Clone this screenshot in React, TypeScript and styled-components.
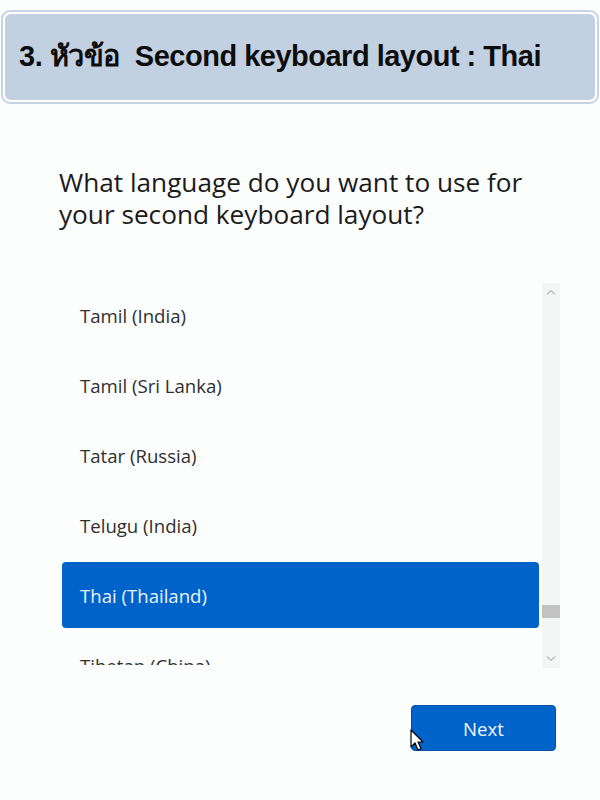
import React from "react";
import styled, { createGlobalStyle } from "styled-components";

const Global = createGlobalStyle`
  html, body { margin: 0; padding: 0; }
  body {
    background: #fcfdfd;
    width: 600px;
    height: 800px;
    overflow: hidden;
    font-family: "Open Sans", "Noto Sans", sans-serif;
  }
`;

const Page = styled.div`
  width: 600px;
  height: 800px;
  position: relative;
  display: flex;
  flex-direction: column;
`;

const HeaderFrame = styled.div`
  margin: 10px 1px 0 1px;
  padding: 2px;
  border: 2px solid #c6d4e3;
  border-radius: 9px;
  background: #ffffff;
`;

const HeaderBox = styled.div`
  height: 86px;
  background: #c2d1e1;
  border-radius: 6px;
  display: flex;
  align-items: center;
  padding: 0 0 2px 14px;
  box-sizing: border-box;
`;

const HeaderTitle = styled.h1`
  margin: 0;
  font-family: "Liberation Sans", "DejaVu Sans", sans-serif;
  font-weight: 700;
  font-size: 29px;
  letter-spacing: -0.5px;
  color: #0d0d0d;
  white-space: pre;
`;

const Content = styled.div`
  padding: 62px 0 0 59px;
  display: flex;
  flex-direction: column;
`;

const Question = styled.h2`
  margin: 0;
  font-family: "Open Sans", "Noto Sans", sans-serif;
  font-weight: 400;
  font-size: 26.2px;
  line-height: 32px;
  color: #1b1b1b;
  width: 490px;
`;

const ListArea = styled.div`
  margin-top: 50px;
  display: flex;
  align-items: flex-start;
`;

const ListViewport = styled.div`
  width: 477px;
  height: 385px;
  overflow: hidden;
  margin-left: 3px;
`;

const Item = styled.div<{ $selected?: boolean }>`
  height: ${(p) => (p.$selected ? 66 : 70)}px;
  margin: ${(p) => (p.$selected ? "2px 0" : "0")};
  box-sizing: border-box;
  display: flex;
  align-items: center;
  padding-left: 18px;
  font-family: "Open Sans", "Noto Sans", sans-serif;
  font-size: 18.6px;
  color: ${(p) => (p.$selected ? "#eaf3ff" : "#2f2f2f")};
  background: ${(p) => (p.$selected ? "#0063ca" : "transparent")};
  border-radius: 4px;
`;

const Scrollbar = styled.div`
  margin-left: 3px;
  margin-top: 3px;
  width: 18px;
  height: 385px;
  background: #f4f5f5;
  display: flex;
  flex-direction: column;
  align-items: center;
  position: relative;
`;

const Arrow = styled.div`
  height: 18px;
  display: flex;
  align-items: center;
  justify-content: center;
  color: #8a8a8a;
`;

const Track = styled.div`
  flex: 1;
  width: 100%;
  position: relative;
`;

const Thumb = styled.div`
  position: absolute;
  left: 0;
  right: 0;
  height: 13px;
  background: #c2c2c2;
`;

const Footer = styled.div`
  margin-top: 37px;
  display: flex;
  justify-content: flex-end;
  padding-right: 44px;
`;

const NextButton = styled.button`
  position: relative;
  width: 145px;
  height: 46px;
  border: 1px solid #0a4ea0;
  border-radius: 4px;
  background: #0063ca;
  color: #f2f7ff;
  font-family: "Open Sans", "Noto Sans", sans-serif;
  font-size: 18.6px;
  padding: 0;
`;

const Cursor = styled.svg`
  position: absolute;
  left: -2px;
  top: 23px;
`;

const Chevron = ({ up }: { up?: boolean }) => (
  <svg width="10" height="6" viewBox="0 0 10 6">
    <path
      d={up ? "M1 5.5 L5 1.5 L9 5.5" : "M1 0.5 L5 4.5 L9 0.5"}
      fill="none"
      stroke="#8a8a8a"
      strokeWidth="1"
    />
  </svg>
);

const items = [
  "Tamil (India)",
  "Tamil (Sri Lanka)",
  "Tatar (Russia)",
  "Telugu (India)",
  "Thai (Thailand)",
  "Tibetan (China)",
];

export default function App() {
  return (
    <>
      <Global />
      <Page>
        <HeaderFrame>
          <HeaderBox>
            <HeaderTitle>{"3. หัวข้อ  Second keyboard layout : Thai"}</HeaderTitle>
          </HeaderBox>
        </HeaderFrame>
        <Content>
          <Question>
            What language do you want to use for your second keyboard layout?
          </Question>
          <ListArea>
            <ListViewport>
              {items.map((it) => (
                <Item key={it} $selected={it === "Thai (Thailand)"}>
                  {it}
                </Item>
              ))}
            </ListViewport>
            <Scrollbar>
              <Arrow>
                <Chevron up />
              </Arrow>
              <Track>
                <Thumb style={{ top: 304 }} />
              </Track>
              <Arrow>
                <Chevron />
              </Arrow>
            </Scrollbar>
          </ListArea>
          <Footer>
            <NextButton>
              Next
              <Cursor width="14" height="22" viewBox="0 0 14 22">
                <path
                  d="M1 1 L1 18 L5 14 L8 21 L11 19.5 L8 13 L13 13 Z"
                  fill="#ffffff"
                  stroke="#000000"
                  strokeWidth="1.2"
                  strokeLinejoin="round"
                />
              </Cursor>
            </NextButton>
          </Footer>
        </Content>
      </Page>
    </>
  );
}
